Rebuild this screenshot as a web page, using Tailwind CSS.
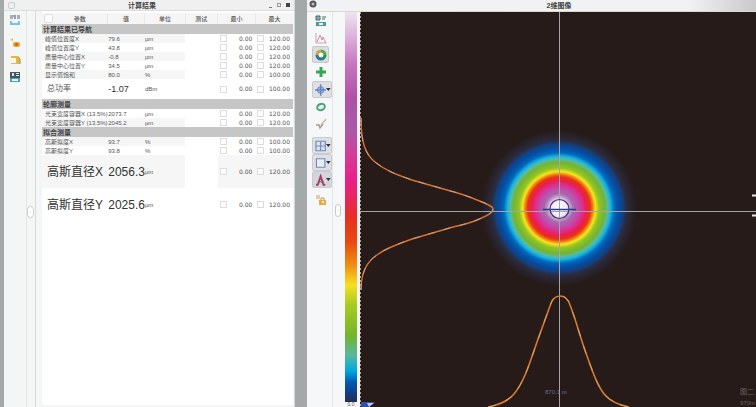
<!DOCTYPE html>
<html lang="zh-CN">
<head>
    <meta charset="UTF-8">
    <meta name="viewport" content="width=device-width, initial-scale=1.0">
    <title>计算结果</title>
    <script src="https://cdn.jsdelivr.net/npm/@tailwindcss/browser@4"></script>
</head>
<body class="min-h-screen bg-[#a5a8a8] font-['Liberation_Sans','Noto_Sans_CJK_SC',sans-serif] text-[6px] leading-none text-[#555]">

    <main class="grid min-h-screen grid-cols-[295fr_449fr] gap-3 overflow-hidden">

        <!-- Results window -->
        <section class="ml-1 flex min-w-0 flex-col border-r border-[#d5d8d8] bg-[#f4f5f5]">
            <header class="flex h-[11px] items-center justify-between border-b border-[#dcdcdc] bg-[#f0f0f1] px-1">
                <span class="size-[7px] rounded-xs border border-[#ccc]"></span>
                <h1 class="text-[7px] font-bold text-[#444]">计算结果</h1>
                <div class="flex items-center gap-[5px]">
                    <button aria-label="最小化" class="mt-1 h-px w-[3px] bg-[#777]"></button>
                    <button aria-label="还原" class="size-1 border border-[#999]"></button>
                    <button aria-label="关闭" class="size-1 bg-[#444]"></button>
                </div>
            </header>

            <div class="flex grow">
                <!-- Toolbar -->
                <nav class="flex w-[23px] shrink-0 flex-col items-center border-r border-[#e3e5e5]">
                    <button aria-label="保存" class="mb-[6px] flex h-[17px] items-center">
                        <svg class="size-3" viewBox="0 0 12 12"><path d="M1 2h4M1 4h3M6 1v4M8 2h3M8 4h3" stroke="#56686c" stroke-width="1.2"/><path d="M1 7h10v4H1z" fill="#7dbfe0"/><path d="M3 7h6v2H3z" fill="#e9f6fb"/></svg>
                    </button>
                    <button aria-label="锁定" class="flex h-[17px] items-center">
                        <svg class="size-3" viewBox="0 0 12 12"><path d="M1 3l3-2v3z" fill="#e9b96a"/><rect x="4" y="5" width="7" height="5" rx="2" fill="#eda32b"/><circle cx="7.500" cy="7.500" r="1.300" fill="#b5532d"/></svg>
                    </button>
                    <button aria-label="复制" class="flex h-[17px] items-center">
                        <svg class="size-3" viewBox="0 0 12 12"><path d="M2 2h7l2 2v6H2z" fill="#e5b64a"/><path d="M2 4h5v5H2z" fill="#fff8e4"/><path d="M9 3l2 2v5" stroke="#86a653" fill="none"/></svg>
                    </button>
                    <button aria-label="导出" class="flex h-[17px] items-center">
                        <svg class="size-3" viewBox="0 0 12 12"><path d="M1 1h10v6H1z" fill="#45585d"/><path d="M3 2h2v3H3zM7 2h3v1H7zM7 4h3v1H7z" fill="#dce6e8"/><path d="M1 7h10v4H1z" fill="#4f9fb7"/><path d="M3 8h6v2H3z" fill="#e5f4f8"/></svg>
                    </button>
                </nav>

                <div class="relative w-[9px] shrink-0 border-r border-[#d9dbdb]">
                    <button aria-label="折叠" class="absolute top-[195px] left-0 h-3 w-[7px] rounded-sm border border-[#c8cccc] bg-white text-[5px]">·</button>
                </div>

                <div class="mr-px mb-[2px] ml-[6px] min-w-0 grow bg-white pt-[2px]">
                    <table class="w-full table-fixed border-collapse whitespace-nowrap">
                        <colgroup>
                            <col class="w-[26%]">
                            <col class="w-[15%]">
                            <col class="w-[16%]">
                            <col class="w-[13%]">
                            <col class="w-[15%]">
                            <col class="w-[15%]">
                        </colgroup>
                        <thead>
                            <tr class="h-[11px] bg-[#f5f5f5]">
                                <th class="p-0 font-medium">
                                    <div class="flex items-center">
                                        <span class="ml-[2px] size-[9px] rounded-xs border border-[#ddd] bg-white"></span>
                                        <span class="grow">参数</span>
                                    </div>
                                </th>
                                <th class="border-l border-[#e8e8e8] p-0 font-medium">值</th>
                                <th class="border-l border-[#e8e8e8] p-0 font-medium">单位</th>
                                <th class="border-l border-[#e8e8e8] p-0 font-medium">测试</th>
                                <th class="border-l border-[#e8e8e8] p-0 font-medium">最小</th>
                                <th class="border-l border-[#e8e8e8] p-0 font-medium">最大</th>
                            </tr>
                        </thead>
                        <tbody id="results"></tbody>
                    </table>
                </div>
            </div>
        </section>

        <!-- 2D beam window -->
        <section class="flex min-w-0 flex-col bg-[#f6f7f8]">
            <header class="relative flex h-[11px] items-center justify-center bg-linear-to-r from-[#f1f2f3] from-85% to-[#c9c9cc] pl-[55px]">
                <svg class="absolute top-0 left-[2px] size-2" viewBox="0 0 8 8"><circle cx="4" cy="4" r="3.500" fill="#555"/><circle cx="4" cy="4" r="1.500" fill="#bbb"/></svg>
                <h2 class="text-[7px] font-bold text-[#444]">2维图像</h2>
            </header>

            <div class="flex grow border-t border-[#ddd9c8]">
                <!-- Toolbar -->
                <nav class="flex w-[26px] shrink-0 flex-col border-r border-[#e4e6e8] pl-[5px]">
                    <button aria-label="保存" class="flex h-[17px] w-[17px] items-center justify-center">
                        <svg class="size-3" viewBox="0 0 12 12"><path d="M1 1h4v4H1zM7 2h4M7 4h3" stroke="#426b69" fill="#8fb0aa"/><path d="M1 7h10v4H1z" fill="#4d9b91"/><path d="M4 8h4v2H4z" fill="#eef8f8"/></svg>
                    </button>
                    <button aria-label="剖面" class="flex h-[17px] w-[17px] items-center justify-center">
                        <svg class="size-3" viewBox="0 0 12 12" fill="none"><path d="M1 1v10h10" stroke="#c8a5b4"/><path d="M2 10L5 3l2 5 1-3 3 6" stroke="#d38a9b"/></svg>
                    </button>
                    <button aria-label="调色板" class="flex h-[17px] w-[17px] items-center justify-center rounded-xs border border-[#c5c7cb] bg-[#dcdde1]">
                        <svg class="size-3" viewBox="0 0 12 12" fill="none" stroke-width="3"><path d="M6 2a4 4 0 0 1 4 4" stroke="#56a84a"/><path d="M10 6a4 4 0 0 1-4 4" stroke="#248d68"/><path d="M6 10a4 4 0 0 1-4-4" stroke="#2d70a4"/><path d="M2 6a4 4 0 0 1 4-4" stroke="#cda73a"/><circle cx="6" cy="6" r="2" fill="#fff"/></svg>
                    </button>
                    <button aria-label="添加" class="flex h-[17px] w-[17px] items-center justify-center">
                        <svg class="size-3" viewBox="0 0 12 12"><path d="M4.500 1h3v3.500H11v3H7.500V11h-3V7.500H1v-3h3.500z" fill="#37a552"/></svg>
                    </button>
                    <button aria-label="十字线" class="mt-px flex h-[17px] items-center justify-between rounded-xs border border-[#c9cbcf] bg-[#dfe0e4] pl-[2px]">
                        <svg class="size-3" viewBox="0 0 12 12" fill="none" stroke="#6485c4"><circle cx="6" cy="6" r="3.500" fill="#a7bbe0"/><path d="M6 0v12M0 6h12" stroke-width="1.500"/></svg>
                        <svg class="h-[3px] w-[5px]" viewBox="0 0 5 3"><path d="M0 0h5L2.500 3z" fill="#333"/></svg>
                    </button>
                    <button aria-label="椭圆" class="flex h-[17px] w-[17px] items-center justify-center">
                        <svg class="size-3" viewBox="0 0 12 12"><ellipse cx="6" cy="6" rx="4" ry="3" fill="#e8f6ee" stroke="#47a57c" stroke-width="2" transform="rotate(-25 6 6)"/></svg>
                    </button>
                    <button aria-label="清除" class="flex h-[17px] w-[17px] items-center justify-center">
                        <svg class="size-3" viewBox="0 0 12 12" fill="none"><path d="M11 1L6 7" stroke="#d8b8a4" stroke-width="1.500"/><path d="M1 7h3l1 3 3-4" stroke="#a4a094" stroke-width="1.500"/></svg>
                    </button>
                    <button aria-label="网格" class="mt-[5px] flex h-[17px] items-center justify-between rounded-xs border border-[#c9cbcf] bg-[#dfe0e4] pl-[2px]">
                        <svg class="size-3" viewBox="0 0 12 12" fill="none"><path d="M1 1h10v10H1zM6 1v10M1 6h10" stroke="#6d89c5" stroke-width="1.200"/></svg>
                        <svg class="h-[3px] w-[5px]" viewBox="0 0 5 3"><path d="M0 0h5L2.500 3z" fill="#333"/></svg>
                    </button>
                    <button aria-label="选区" class="flex h-[17px] items-center justify-between rounded-xs border border-[#c9cbcf] bg-[#dfe0e4] pl-[2px]">
                        <svg class="size-3" viewBox="0 0 12 12"><path d="M1.500 1.500h9v9h-9z" fill="#e9edf7" stroke="#6d89c5" stroke-width="1.200"/></svg>
                        <svg class="h-[3px] w-[5px]" viewBox="0 0 5 3"><path d="M0 0h5L2.500 3z" fill="#333"/></svg>
                    </button>
                    <button aria-label="拟合" class="flex h-[17px] items-center justify-between rounded-xs border border-[#c9cbcf] bg-[#d5d6dc] pl-[2px]">
                        <svg class="size-3" viewBox="0 0 12 12" fill="none"><path d="M1 11h2L6 2l3 9h2" stroke="#a83d61" stroke-width="2"/><path d="M3 8h6" stroke="#555d86"/></svg>
                        <svg class="h-[3px] w-[5px]" viewBox="0 0 5 3"><path d="M0 0h5L2.500 3z" fill="#333"/></svg>
                    </button>
                    <button aria-label="锁定" class="mt-[3px] flex h-[17px] w-[17px] items-center justify-center">
                        <svg class="size-3" viewBox="0 0 12 12"><path d="M1 1h4v4H1z" fill="#e8c9a8"/><path d="M4 6h7v5H4z" fill="#e6ab48"/><path d="M6 6V4h3v2" stroke="#c9974f" fill="none"/><path d="M7 7h2v2H7z" fill="#fff2d9"/></svg>
                    </button>
                </nav>

                <div class="relative w-[12px] shrink-0">
                    <button aria-label="折叠" class="absolute top-[192px] left-[2px] h-[13px] w-[6px] rounded-sm border border-[#c3cad3] bg-white text-[5px]">·</button>
                </div>

                <!-- Colour scale -->
                <div class="flex w-[12px] shrink-0 flex-col">
                    <div class="grow bg-linear-[to_bottom,#efe4f1_0%,#dcb4dc_6%,#c878c0_13%,#b050a8_22%,#a85aa8_30%,#d63a96_37%,#e8208a_43%,#e82850_49%,#e83020_53%,#e84a10_59%,#f09010_65%,#f5e020_70%,#a8cc20_75%,#74b42c_83%,#58b8a0_88%,#00a8e0_92%,#0058b0_95%,#143c80_98%,#283048_100%]"></div>
                    <span class="h-[5px] text-center text-[5px] leading-[5px]">0.0</span>
                </div>

                <!-- Beam image with both profiles -->
                <div class="relative ml-[3px] grow overflow-hidden bg-[#261b19]">
                    <svg class="absolute inset-0 size-full" viewBox="360 12 396 395" preserveAspectRatio="xMinYMin slice" fill="none">
                        <defs>
                            <radialGradient id="beam" gradientUnits="userSpaceOnUse" cx="559" cy="208" r="80">
                                <stop offset="0" stop-color="#fff"/>
                                <stop offset=".1" stop-color="#f3eaf5"/>
                                <stop offset=".14" stop-color="#c79fcc"/>
                                <stop offset=".18" stop-color="#aa68ae"/>
                                <stop offset=".23" stop-color="#b854aa"/>
                                <stop offset=".29" stop-color="#dc2e98"/>
                                <stop offset=".34" stop-color="#e8204c"/>
                                <stop offset=".39" stop-color="#ea3018"/>
                                <stop offset=".42" stop-color="#f07a10"/>
                                <stop offset=".455" stop-color="#f7e61c"/>
                                <stop offset=".5" stop-color="#92c424"/>
                                <stop offset=".57" stop-color="#72b432"/>
                                <stop offset=".61" stop-color="#58bba0"/>
                                <stop offset=".645" stop-color="#14b4e4"/>
                                <stop offset=".69" stop-color="#0068bc"/>
                                <stop offset=".75" stop-color="#064ca0"/>
                                <stop offset=".8" stop-color="#144080"/>
                                <stop offset=".84" stop-color="#2a2c40"/>
                                <stop offset=".97" stop-color="#261b19"/>
                            </radialGradient>
                        </defs>
                        <circle cx="559" cy="208" r="80" fill="url(#beam)"/>
                        <path d="M559.500 12v395M360 211.500h396" stroke="#a5a5a5"/>
                        <circle cx="559.500" cy="209" r="9.500" stroke="#38367e" stroke-width="1.200"/>
                        <path d="M543 209.500h33" stroke="#2c3d8c" stroke-width="1.400"/>

                        <!-- Vertical profile -->
                        <path d="M361 118C361 142 365 154 375 162C386 171 398 175 412 180L447 190C462 194 470 197 477 200C487 204 493 206 493 209C493 213 487 216 477 220C470 223 462 225 453 227L412 239C398 244 393 246 387 249C380 252 377 255 373 258C364 266 361 278 361 290" stroke="#d9702e" stroke-width="1.400"/>
                        <path d="M361 118C361 142 365 154 375 162C386 171 398 175 412 180L447 190C462 194 470 197 477 200C487 204 493 206 493 209C493 213 487 216 477 220C470 223 462 225 453 227L412 239C398 244 393 246 387 249C380 252 377 255 373 258C364 266 361 278 361 290" stroke="#b9a49a" stroke-dasharray="7 9"/>

                        <!-- Horizontal profile -->
                        <path d="M488 407C499 405 508 401 514 394C524 382 529 365 537 342L550 306C552 299 555 296 560 296C565 296 568 299 570 305C576 320 580 337 587 356C593 373 598 387 605 395C611 402 619 405 629 407" stroke="#d9792e" stroke-width="1.600"/>
                        <path d="M488 407C499 405 508 401 514 394C524 382 529 365 537 342L550 306C552 299 555 296 560 296C565 296 568 299 570 305C576 320 580 337 587 356C593 373 598 387 605 395C611 402 619 405 629 407" stroke="#c9a36c" stroke-dasharray="8 10"/>

                        <path d="M360.500 12v395" stroke="#bd9d84" stroke-dasharray="2 2"/>
                        <path d="M361 402h14l-7 5h-7z" fill="#2f4fb0"/>
                        <path d="M367 403h7l-5 4z" fill="#c3cdf0"/>
                        <path d="M752 195.500h4M752 215.500h4" stroke="#e8e8e8" stroke-width="2"/>
                        <text x="545" y="394" font-size="6" fill="#68718c">870.1 m</text>
                        <text x="740" y="394" font-size="7" fill="#6b6462">图二</text>
                        <text x="740" y="405" font-size="6" fill="#6b6462">970m</text>
                    </svg>
                </div>
            </div>
        </section>
    </main>

    <script>
        // Rows with only a title are section bars
        const rows = [
            { title: '计算结果已导航' },
            { name: '峰值位置度X', value: '79.6', unit: 'µm', max: '120.00', shade: true },
            { name: '峰值位置度Y', value: '43.8', unit: 'µm', max: '120.00' },
            { name: '质量中心位置X', value: '-0.8', unit: 'µm', max: '120.00', shade: true },
            { name: '质量中心位置Y', value: '34.5', unit: 'µm', max: '120.00' },
            { name: '显示值饱和', value: '80.0', unit: '%', max: '100.00', shade: true },
            { name: '总功率', value: '-1.07', unit: 'dBm', max: '100.00', size: 'medium' },
            { title: '轮廓测量' },
            { name: '光束宽度容器X (13.5%)', value: '2073.7', unit: 'µm', max: '120.00' },
            { name: '光束宽度容器Y (13.5%)', value: '2045.2', unit: 'µm', max: '120.00', shade: true },
            { title: '拟合测量' },
            { name: '高斯拟度X', value: '93.7', unit: '%', max: '100.00', shade: true },
            { name: '高斯拟度Y', value: '93.8', unit: '%', max: '100.00' },
            { name: '高斯直径X', value: '2056.3', unit: 'µm', max: '120.00', size: 'large', shade: true },
            { name: '高斯直径Y', value: '2025.6', unit: 'µm', max: '120.00', size: 'large' },
        ];

        const styles = {
            small: { row: 'h-[9px]', name: 'pl-[3px]', value: '' },
            medium: { row: 'h-[20px]', name: 'pl-[5px] text-[8px]', value: 'text-[9px] text-[#333]' },
            large: { row: 'h-[33px]', name: 'pl-[5px] text-[12px] text-[#333]', value: 'text-[12px] text-[#333]' },
        };

        function limitCell(label, value, bg) {
            return `<td class="p-0 ${bg}">
                <label class="flex items-center justify-between pr-[3px] pl-[2px] font-['DejaVu_Sans',sans-serif]">
                    <input type="checkbox" aria-label="${label}" class="size-[7px] appearance-none border border-[#ddd] bg-white">
                    <span>${value}</span>
                </label>
            </td>`;
        }

        document.getElementById('results').innerHTML = rows.map(row => {
            if (row.title) {
                return `<tr class="h-[10px] bg-[#c6c6c6]"><th colspan="6" class="p-0 pl-px text-left text-[7px] font-bold text-[#444]">${row.title}</th></tr>`;
            }
            const s = styles[row.size || 'small'];
            const bg = row.shade ? 'bg-[#f6f6f6]' : '';
            const limitBg = row.shade && row.size === 'large' ? 'bg-[#f6f6f6]' : '';
            return `<tr class="${s.row}">
                <td class="p-0 ${s.name} ${bg}">${row.name}</td>
                <td class="p-0 pl-px ${s.value} ${bg}">${row.value}</td>
                <td class="p-0 ${bg}">${row.unit}</td>
                <td class="p-0"></td>
                ${limitCell(row.name + ' 最小', '0.00', limitBg)}
                ${limitCell(row.name + ' 最大', row.max, limitBg)}
            </tr>`;
        }).join('');
    </script>

</body>
</html>
